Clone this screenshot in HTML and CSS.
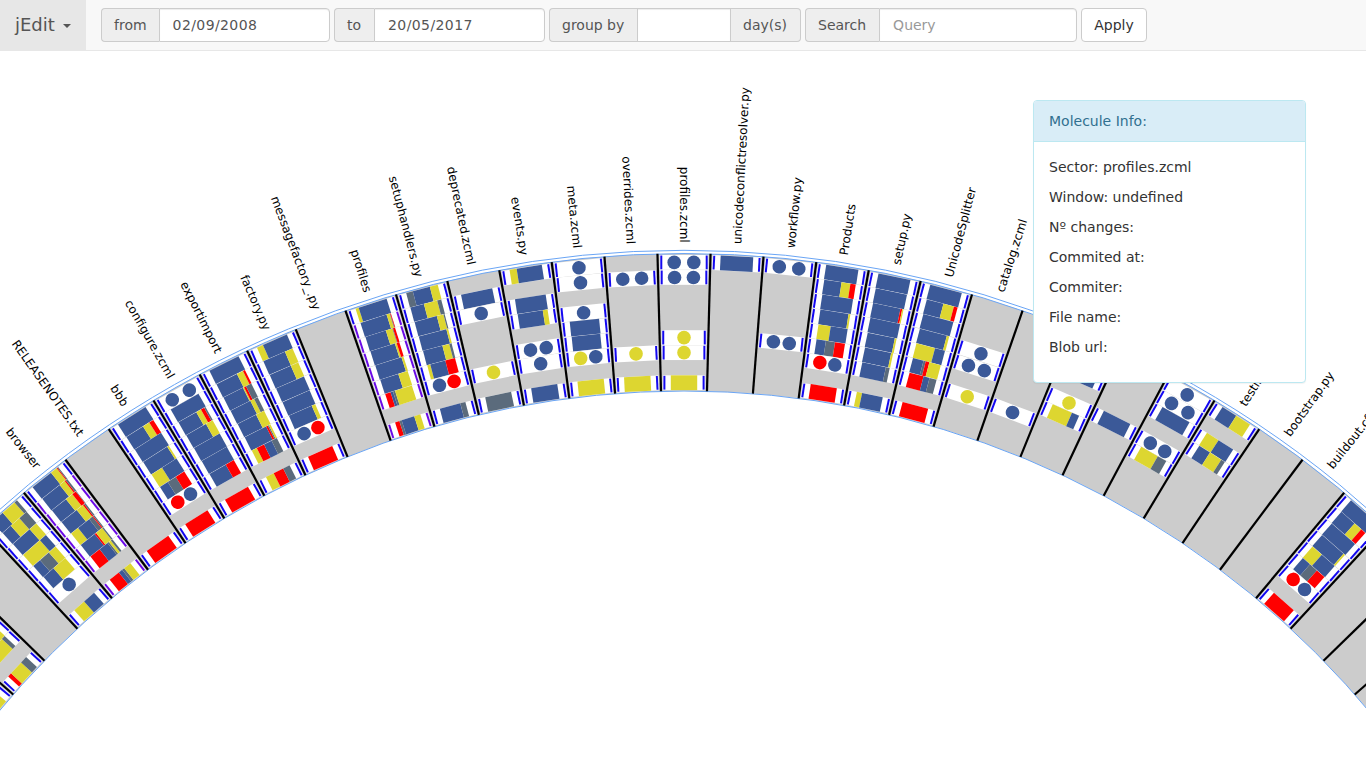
FILE: index.html
```html
<!DOCTYPE html>
<html lang="en">
<head>
<meta charset="utf-8">
<title>jEdit</title>
<link rel="stylesheet" href="styles.css">
</head>
<body>
<nav class="navbar">
  <a class="brand">jEdit <span class="caret"></span></a>
  <form class="filters">
    <div class="group g-from"><span class="addon">from</span><input class="control date" type="text" value="02/09/2008"></div>
    <div class="group g-to"><span class="addon">to</span><input class="control date" type="text" value="20/05/2017"></div>
    <div class="group g-by"><span class="addon">group by</span><input class="control" type="text"><span class="addon last">day(s)</span></div>
    <div class="group g-search"><span class="addon">Search</span><input class="control" type="text" placeholder="Query"></div>
    <button class="apply" type="button">Apply</button>
  </form>
</nav>
<main class="stage">
  <svg id="chart" class="chart" width="1366" height="717" viewBox="0 51 1366 717"></svg>
  <section class="panel">
    <h3 class="panel-title">Molecule Info:</h3>
    <div class="panel-body">
      <p>Sector: profiles.zcml</p>
      <p>Window: undefined</p>
      <p>Nº changes:</p>
      <p>Commited at:</p>
      <p>Commiter:</p>
      <p>File name:</p>
      <p>Blob url:</p>
    </div>
  </section>
</main>
<script src="chart.js"></script>
</body>
</html>
```
FILE: styles.css
```css
* { box-sizing: border-box; }
body {
  margin: 0;
  height: 768px;
  overflow: hidden;
  background: #fff;
  color: #333;
  font: 14px/20px "DejaVu Sans", sans-serif;
}
.navbar {
  display: flex;
  height: 51px;
  background: #f8f8f8;
  border-bottom: 1px solid #e7e7e7;
}
.brand {
  display: flex;
  align-items: center;
  width: 86px;
  padding-left: 15px;
  background: #e7e7e7;
  color: #555;
  font-size: 18px;
}
.caret {
  margin: 2px 0 0 8px;
  border-top: 4px solid #555;
  border-left: 4px solid transparent;
  border-right: 4px solid transparent;
}
.filters {
  display: flex;
  align-items: center;
  gap: 4px;
  padding-left: 15px;
}
.group { display: flex; height: 34px; }
.g-from { width: 229px; }
.g-to { width: 211px; }
.g-by { width: 252px; }
.g-search { width: 272px; }
.addon {
  flex: none;
  padding: 6px 13px 6px 12px;
  background: #eee;
  border: 1px solid #ccc;
  border-right: 0;
  border-radius: 4px 0 0 4px;
  color: #555;
}
.g-from .addon { padding-right: 12px; }
.addon.last {
  border-left: 0;
  border-right: 1px solid #ccc;
  border-radius: 0 4px 4px 0;
}
.control {
  flex: 1;
  min-width: 0;
  padding: 6px 12px 6px 13px;
  border: 1px solid #ccc;
  border-radius: 0 4px 4px 0;
  background: #fff;
  box-shadow: inset 0 1px 1px rgba(0, 0, 0, .075);
  color: #555;
  font: inherit;
}
.control.date { letter-spacing: .4px; }
.g-by .control { border-radius: 0; }
.control::placeholder { color: #999; }
.apply {
  height: 34px;
  width: 66px;
  padding: 0;
  background: #fff;
  border: 1px solid #ccc;
  border-radius: 4px;
  color: #333;
  font: inherit;
}
.stage { position: relative; height: 717px; }
.chart { display: block; overflow: hidden; }
.chart text {
  font: 12px "DejaVu Sans", sans-serif;
  fill: #000;
}
.ring { fill: none; stroke: #ccc; }
.outline { fill: none; stroke: #6aa5f5; stroke-width: 1; }
.divider { stroke: #000; stroke-width: 2.2; }
.cell { fill: #fff; }
.panel {
  position: absolute;
  left: 1033px;
  top: 49px;
  width: 273px;
  background: #fff;
  border: 1px solid #bce8f1;
  border-radius: 4px;
  box-shadow: 0 1px 1px rgba(0, 0, 0, .05);
}
.panel-title {
  margin: 0;
  padding: 10px 15px;
  background: #d9edf7;
  border-bottom: 1px solid #bce8f1;
  border-radius: 3px 3px 0 0;
  color: #31708f;
  font-size: 14px;
  font-weight: normal;
}
.panel-body { padding: 15px; }
.panel-body p { margin: 0 0 10px; }
```
FILE: chart.js
```js
const CX = 684, CY = 1284, STEP = 360 / 122;
const R_IN = 893, R_OUT = 1030.5, ROW = 15.04;
const COLORS = { B: '#3b5998', Y: '#ddd630', R: '#ff0000', S: '#5b6b7c' };

const LABELS = {
  '-13': 'browser', '-12': 'RELEASENOTES.txt', '-11': 'bbb', '-10': 'configure.zcml',
  '-9': 'exportimport', '-8': 'factory.py', '-7': 'messagefactory_.py', '-6': 'profiles',
  '-5': 'setuphandlers.py', '-4': 'deprecated.zcml', '-3': 'events.py', '-2': 'meta.zcml',
  '-1': 'overrides.zcml', '0': 'profiles.zcml', '1': 'unicodeconflictresolver.py',
  '2': 'workflow.py', '3': 'Products', '4': 'setup.py', '5': 'UnicodeSplitter',
  '6': 'catalog.zcml', '11': 'testing.py', '12': 'bootstrap.py', '13': 'buildout.cfg'
};

// Each sector maps row -> content. "o" + colours is circles, otherwise
// colour/percent pairs laid out left to right.
const PRODUCT = { 0: 'B100', 1: 'B55 Y28 R17', 2: 'B100', 3: 'B94 Y6', 4: 'Y42 B58', 5: 'B33 S32 R35', 6: 'oRB', 8: 'R100' };
const SECTORS = {
  '-17': { 6: 'Y100', 8: 'Y100' },
  '-16': { 4: 'Y100', 5: 'B40 Y60', 6: 'Y86 S14', 8: 'R16 Y56 S28' },
  '-14': { 0: 'B42 Y48 S10', 1: 'B34 Y36 S30', 2: 'B72 Y28', 3: 'Y74 B26', 4: 'B30 S40 Y30', 5: 'B46 Y54', 6: 'oB', 8: 'Y50 B50' },
  '-13': { 0: 'B72 Y22 R3 S3', 1: 'B70 Y20 R4 S6', 2: 'B58 Y26 R14 S2', 3: 'B64 Y26 R5 S5', 4: 'Y30 B48 S14 R4 S4', 5: 'B62 R6 Y27 S5', 6: 'R42 B36 S6 Y9 S7', 8: 'R44 B16 S10 Y30' },
  '-12': { 8: 'R100' },
  '-11': { 0: 'B100', 1: 'B62 Y23 R15', 2: 'B100', 3: 'B94 Y6', 4: 'Y42 B58', 5: 'B32 S33 R35', 6: 'oRB', 8: 'R100' },
  '-10': { 0: 'oBB', 1: 'B100', 2: 'B66 Y17 R12 S5', 3: 'B75 Y25', 4: 'B100', 5: 'B100', 6: 'B67 R33', 8: 'R100' },
  '-9': { 0: 'B100', 1: 'B72 Y21 R7', 2: 'B70 Y4 R7 S19', 3: 'B73 Y14 S13', 4: 'B70 Y30', 5: 'B83 R7 S4 Y6', 6: 'Y20 R29 B30 S21', 8: 'Y33 R40 S27' },
  '-8': { 0: 'Y20 B80', 1: 'B74 Y26', 2: 'B74 Y26', 3: 'B100', 4: 'B100', 5: 'B87 Y13', 6: 'oBR', 8: 'R100' },
  '-6': { 0: 'Y10 B90', 1: 'B86 Y10 S2 R2', 2: 'B69 Y22 S2 R7', 3: 'B85 Y6 R9', 4: 'B93 Y7', 5: 'B66 Y34', 6: 'R20 B9 S8 Y63', 8: 'R17 S9 B50 Y24' },
  '-5': { 0: 'S21 B54 Y25', 1: 'B44 Y43 S13', 2: 'B74 Y22 S4', 3: 'B94 Y6', 4: 'B68 Y24 S8', 5: 'Y11 B54 R35', 6: 'oBR', 8: 'B80 S20' },
  '-4': { 1: 'B100', 2: 'oB', 6: 'oY', 8: 'S100' },
  '-3': { 0: 'Y22 B78', 2: 'B100', 3: 'B84 Y16', 5: 'oBB', 6: 'oB', 8: 'B100' },
  '-2': { 0: 'oB', 1: 'oB', 3: 'oB', 4: 'B100', 5: 'B100', 6: 'oYB', 8: 'Y100' },
  '-1': { 1: 'oBB', 6: 'oY', 8: 'Y100' },
  '0': { 0: 'oBB', 1: 'oBB', 5: 'oY', 6: 'oY', 8: 'Y100' },
  '1': { 0: 'B100' },
  '2': { 0: 'oBB', 5: 'oBB' },
  '3': PRODUCT,
  '4': { 0: 'B100', 1: 'B100', 2: 'B90 R6 Y4', 3: 'B100', 4: 'B94 Y6', 5: 'B93 Y7', 6: 'B86 S14', 8: 'Y20 B80' },
  '5': { 0: 'B100', 1: 'B54 Y34 R12', 2: 'B100', 3: 'B92 Y8', 4: 'Y65 B35', 5: 'B38 S8 R13 Y41', 6: 'R52 B22 S26', 8: 'R100' },
  '6': { 3: 'oB', 4: 'oBB', 6: 'oY' },
  '7': { 6: 'oB' },
  '8': { 2: 'B100', 4: 'oY', 5: 'Y73 B27' },
  '9': { 4: 'B100' },
  '10': { 0: 'oB', 1: 'oBB', 2: 'B100', 4: 'oBB', 5: 'Y66 S34' },
  '11': { 0: 'B50 Y50', 2: 'Y44 B56', 3: 'B42 Y44 S14' },
  '14': PRODUCT
};
const PURPLE = { '-13': true, '-6': true };

const chart = document.getElementById('chart');
function add(parent, tag, attrs) {
  const el = document.createElementNS('http://www.w3.org/2000/svg', tag);
  for (const k in attrs) el.setAttribute(k, attrs[k]);
  parent.appendChild(el);
  return el;
}
const rect = (p, x, y, w, h, fill) => add(p, 'rect', { x, y, width: w, height: h, fill });

add(chart, 'circle', { class: 'ring', cx: CX, cy: CY, r: (R_IN + R_OUT) / 2, 'stroke-width': R_OUT - R_IN });
for (const r of [R_IN, R_OUT, 1033.7]) add(chart, 'circle', { class: 'outline', cx: CX, cy: CY, r });

for (let k = -18; k <= 18; k++) {
  const sector = add(chart, 'g', { transform: `translate(${CX} ${CY}) rotate(${k * STEP})` });
  for (const row in SECTORS[k] || {}) {
    const r = 1021.6 - row * ROW;
    const hw = r * 0.02575;
    const cell = add(sector, 'g', { transform: `translate(0 ${-r})` });
    add(cell, 'rect', { class: 'cell', x: -hw + 2, y: -7.4, width: 2 * hw - 4, height: 14.8 });
    const mark = PURPLE[k] && row > 0 ? '#6a0be6' : '#1408f0';
    rect(cell, -hw + 2.6, -6.9, 2, 13.8, mark);
    rect(cell, hw - 4.6, -6.9, 2, 13.8, mark);
    const half = hw - 10;
    const spec = SECTORS[k][row];
    if (spec[0] === 'o') {
      const dots = spec.slice(1);
      [...dots].forEach((c, i) => {
        const cx = dots.length === 1 ? 0 : (i ? 1 : -1) * (9.8 - row * 0.37);
        add(cell, 'circle', { cx, cy: 0, r: 6.8, fill: COLORS[c] });
      });
    } else {
      let x = -half;
      for (const part of spec.split(' ')) {
        const w = half * 2 * part.slice(1) / 100;
        rect(cell, x, -7.4, w, 14.8, COLORS[part[0]]);
        x += w;
      }
    }
  }
}

for (let k = -19; k <= 18; k++) {
  add(chart, 'line', {
    class: 'divider', x1: 0, x2: 0, y1: -R_IN, y2: -R_OUT,
    transform: `translate(${CX} ${CY}) rotate(${(k + 0.5) * STEP})`
  });
}

for (const k in LABELS) {
  const left = k <= 0;
  const t = add(chart, 'text', {
    transform: `translate(${CX} ${CY}) rotate(${k * STEP}) translate(${left ? 0.6 : -0.6} -1041.3) rotate(${left ? 90 : -90})`,
    'text-anchor': left ? 'end' : 'start', dy: '0.35em'
  });
  t.textContent = LABELS[k];
}
```
